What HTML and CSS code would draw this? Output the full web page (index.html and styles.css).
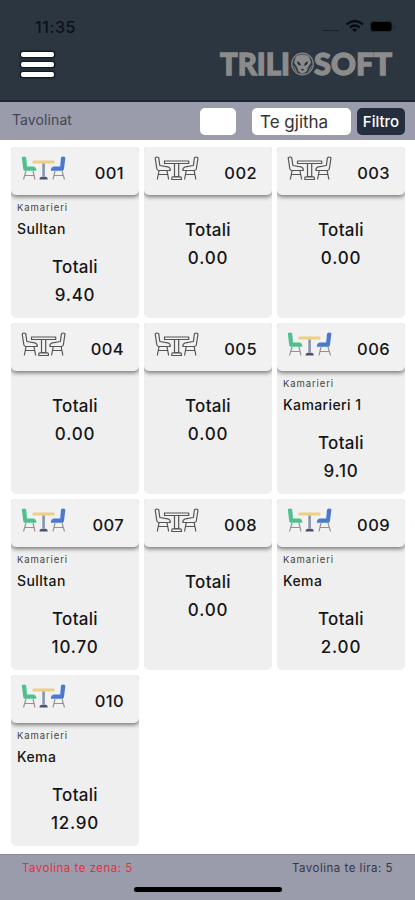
FILE: index.html
```
<!DOCTYPE html>
<html lang="sq">
<head>
  <meta charset="UTF-8">
  <meta name="viewport" content="width=device-width, initial-scale=1.0">
  <title>Triliosoft - Tavolinat</title>
  <link rel="stylesheet" href="styles.css">
</head>
<body>
  <svg class="defs" width="0" height="0">
    <!-- occupied table -->
    <symbol id="busy" viewBox="0 0 46 26">
      <g fill="none" stroke="#9a8e92" stroke-width="1.100">
        <path d="M5 15l-2.500 8.500M12 15l2 8.500M4 19.500h9M34 15l-2 8.500M41 15l2.500 8.500M33 19.500h9"/>
      </g>
      <path d="M.8 1.200q2.500-1.400 4.400.3l.8 9h6.500q2.800.6 2.800 4.200H3.500q-1.200-.6-1.300-2z" fill="#4fc08d"/>
      <path d="M44.400 1.200q-2.500-1.400-4.400.3l-.8 9h-6.500q-2.800.6-2.800 4.200h11.800q1.200-.6 1.300-2z" fill="#4a78d0"/>
      <rect x="11.500" y="4.500" width="22" height="3" rx="1" fill="#efd083"/>
      <path d="M21.300 7.500h2.600v13h-2.600z" fill="#8b93ab"/>
      <path d="M18.500 23.500q0-2.700 2.500-2.700h3.200q2.500 0 2.500 2.700z" fill="#4b506a"/>
    </symbol>
    <!-- free table -->
    <symbol id="free" viewBox="0 0 46 26">
      <g fill="none" stroke="#555" stroke-width="1.200" stroke-linejoin="round">
        <path d="M1.200 2q1.800-2 3.600 0l1 7.500 8 1.300q3 1.200 2.500 3.700H4.500q-1.600-.6-1.700-2z"/>
        <path d="M44 2q-1.800-2-3.600 0l-1 7.500-8 1.300q-3 1.200-2.500 3.700h11.800q1.600-.6 1.700-2z"/>
        <path d="M5 15l-1.700 8.500M13 15l1.700 8.500M4 18.500h10M32.200 15l-1.700 8.500M40.200 15l1.700 8.500M31.200 18.500h10"/>
        <path d="M10.500 7.500V5h24.200v2.500zM20.500 7.500v13h4.200v-13M17.800 23.500v-1.700q0-1 1-1h7.600q1 0 1 1v1.700z"/>
      </g>
    </symbol>
  </svg>

  <header class="header">
    <div class="status">
      <span class="time">11:35</span>
      <svg class="signal" width="76" height="14" viewBox="0 0 76 14">
        <path d="M1 11.500h16" stroke="#18212a" stroke-width="1"/>
        <g fill="none" stroke="#080c12" stroke-width="2.300">
          <path d="M24.500 5.300q8.200-6.600 16.400 0"/>
          <path d="M27.800 8.500q4.900-3.900 9.800 0"/>
        </g>
        <path d="M30 10.300q2.700-1.600 5.400 0l-2.700 2.900z" fill="#080c12"/>
        <rect x="48.500" y="2.500" width="21.500" height="10" rx="3" fill="#000" stroke="#222b34"/>
        <path d="M72 5.500q2 2 0 4z" fill="#1b242d"/>
      </svg>
    </div>
    <div class="topbar">
      <button class="menu" aria-label="Menu"><i></i><i></i><i></i></button>
      <svg class="logo" width="178" height="46" viewBox="-2 -8 178 46">
        <g class="logo-text">
          <text x="1" y="23.500" textLength="70" lengthAdjust="spacingAndGlyphs">TRILI</text>
          <text x="95" y="23.500" textLength="78" lengthAdjust="spacingAndGlyphs">SOFT</text>
        </g>
        <!-- lion head -->
        <circle cx="83.500" cy="13" r="10.800" fill="#343c44" stroke="#858585" stroke-width="1.200"/>
        <path d="M77 5.500q6.500-4 13 0l2 6-3 4.500-1.500 4.500-4 2.500-4-2.500-1.500-4.500-3-4.500z" fill="#8b8b8b"/>
        <path d="M78 10.500q3 0 4 4-3.500.5-4-4zM89 10.500q-3 0-4 4 3.500.5 4-4z" fill="#262e37"/>
        <path d="M81.800 18h3.400l-1.700 2z" fill="#262e37"/>
        <path d="M74.500 15l3 5.500M92.500 15l-3 5.500" fill="none" stroke="#858585"/>
      </svg>
    </div>
  </header>

  <div class="filter">
    <span class="filter-title">Tavolinat</span>
    <span class="box small"></span>
    <span class="box select">Te gjitha</span>
    <button class="filter-btn">Filtro</button>
  </div>

  <main class="tables">
    <div class="card">
      <div class="card-head"><svg class="icon"><use href="#busy"/></svg><span>001</span></div>
      <div class="waiter"><small>Kamarieri</small><b>Sulltan</b></div>
      <div class="total">Totali<span>9.40</span></div>
    </div>
    <div class="card">
      <div class="card-head"><svg class="icon"><use href="#free"/></svg><span>002</span></div>
      <div class="total">Totali<span>0.00</span></div>
    </div>
    <div class="card">
      <div class="card-head"><svg class="icon"><use href="#free"/></svg><span>003</span></div>
      <div class="total">Totali<span>0.00</span></div>
    </div>
    <div class="card">
      <div class="card-head"><svg class="icon"><use href="#free"/></svg><span>004</span></div>
      <div class="total">Totali<span>0.00</span></div>
    </div>
    <div class="card">
      <div class="card-head"><svg class="icon"><use href="#free"/></svg><span>005</span></div>
      <div class="total">Totali<span>0.00</span></div>
    </div>
    <div class="card">
      <div class="card-head"><svg class="icon"><use href="#busy"/></svg><span>006</span></div>
      <div class="waiter"><small>Kamarieri</small><b>Kamarieri 1</b></div>
      <div class="total">Totali<span>9.10</span></div>
    </div>
    <div class="card">
      <div class="card-head"><svg class="icon"><use href="#busy"/></svg><span>007</span></div>
      <div class="waiter"><small>Kamarieri</small><b>Sulltan</b></div>
      <div class="total">Totali<span>10.70</span></div>
    </div>
    <div class="card">
      <div class="card-head"><svg class="icon"><use href="#free"/></svg><span>008</span></div>
      <div class="total">Totali<span>0.00</span></div>
    </div>
    <div class="card">
      <div class="card-head"><svg class="icon"><use href="#busy"/></svg><span>009</span></div>
      <div class="waiter"><small>Kamarieri</small><b>Kema</b></div>
      <div class="total">Totali<span>2.00</span></div>
    </div>
    <div class="card">
      <div class="card-head"><svg class="icon"><use href="#busy"/></svg><span>010</span></div>
      <div class="waiter"><small>Kamarieri</small><b>Kema</b></div>
      <div class="total">Totali<span>12.90</span></div>
    </div>
  </main>

  <footer class="footer">
    <div class="counts">
      <span class="busy-count">Tavolina te zena: 5</span>
      <span>Tavolina te lira: 5</span>
    </div>
    <div class="home-bar"></div>
  </footer>
</body>
</html>
```
FILE: styles.css
```
* {
  box-sizing: border-box;
}
body {
  margin: 0;
  height: 900px;
  display: flex;
  flex-direction: column;
  overflow: hidden;
  background: #fff;
  color: #161616;
  font-family: Inter, "Liberation Sans", sans-serif;
}
button {
  border: 0;
  padding: 0;
  font-family: inherit;
}
.defs {
  display: block;
  flex: none;
}

/* header */
.header {
  height: 102px;
  flex: none;
  background: #2c3640;
  border-bottom: 2px solid #1a2430;
}
.status {
  display: flex;
  justify-content: space-between;
  padding: 19px 17px 0 35px;
  height: 43px;
}
.time {
  font-size: 16px;
  line-height: 17px;
  font-weight: 500;
  letter-spacing: 0.6px;
  color: #0c1119;
}
.signal {
  display: block;
}
.topbar {
  display: flex;
  justify-content: space-between;
  padding: 0 20px 0 21px;
}
.menu {
  display: flex;
  flex-direction: column;
  gap: 5px;
  width: 34px;
  height: 37px;
  padding-top: 9px;
  background: none;
}
.menu i {
  width: 33px;
  height: 5px;
  border-radius: 2px;
  background: #fff;
  box-shadow: 0 0 2px 1px #07101c;
}
.logo {
  display: block;
}
.logo-text {
  font-family: Lato, sans-serif;
  font-size: 31px;
  font-weight: 900;
  fill: #8b8b8b;
  stroke: #8b8b8b;
  stroke-width: 1.3px;
}

/* filter row */
.filter {
  height: 38px;
  flex: none;
  display: flex;
  align-items: center;
  padding: 1px 10px 0 12px;
  background: #9a9bab;
}
.filter-title {
  flex: 1;
  margin-top: -4px;
  font-size: 14px;
  letter-spacing: 0.1px;
  color: #454654;
}
.box {
  height: 27px;
  border-radius: 5px;
  background: #fff;
}
.small {
  width: 36px;
  margin-right: 16px;
}
.select {
  width: 99px;
  margin-right: 6px;
  padding-left: 8px;
  font-size: 17px;
  line-height: 28px;
  color: #333;
}
.filter-btn {
  width: 48px;
  height: 27px;
  border-radius: 5px;
  background: #242e3e;
  color: #fff;
  font-size: 15px;
  font-weight: 500;
}

/* tables */
.tables {
  flex: 1;
  display: grid;
  grid-template-columns: repeat(3, 128px);
  grid-auto-rows: 171px;
  gap: 5px;
  align-content: start;
  padding: 7px 11px 0;
}
.card {
  border-radius: 5px;
  background: #efefef;
  display: flex;
  flex-direction: column;
}
.card-head {
  height: 48px;
  flex: none;
  display: flex;
  justify-content: space-between;
  padding: 9px 15px 0 10px;
  border-radius: 5px;
  background: #f1f1f1;
  box-shadow: 0 2px 4px rgba(0, 0, 0, 0.5);
  clip-path: inset(0 0 -8px 0);
  font-size: 16.5px;
  line-height: 34px;
  font-weight: 500;
}
.card-head span {
  letter-spacing: 0.4px;
}
.icon {
  width: 46px;
  height: 26px;
}
.waiter {
  display: flex;
  flex-direction: column;
  height: 44px;
  padding: 7px 6px 0;
}
.waiter small {
  font-size: 9.5px;
  line-height: 12px;
  letter-spacing: 0.9px;
  color: #444;
}
.waiter b {
  margin-top: 6px;
  font-size: 14px;
  line-height: 18px;
  font-weight: 500;
  letter-spacing: 0.4px;
}
.total {
  display: flex;
  flex-direction: column;
  padding-top: 21px;
  text-align: center;
  font-size: 17px;
  line-height: 28px;
  font-weight: 500;
  letter-spacing: 0.3px;
}
.total span {
  letter-spacing: 0.8px;
}
.waiter + .total {
  padding-top: 14px;
}

/* footer */
.footer {
  height: 46px;
  flex: none;
  background: #9a9bab;
  border-top: 1px solid #878994;
}
.counts {
  display: flex;
  justify-content: space-between;
  padding: 5px 22px 0;
  font-size: 11.5px;
  line-height: 16px;
  letter-spacing: 0.5px;
  color: #373844;
}
.busy-count {
  color: #e2343f;
}
.home-bar {
  width: 148px;
  height: 5px;
  margin: 11px auto 0;
  border-radius: 3px;
  background: #000;
}
```
